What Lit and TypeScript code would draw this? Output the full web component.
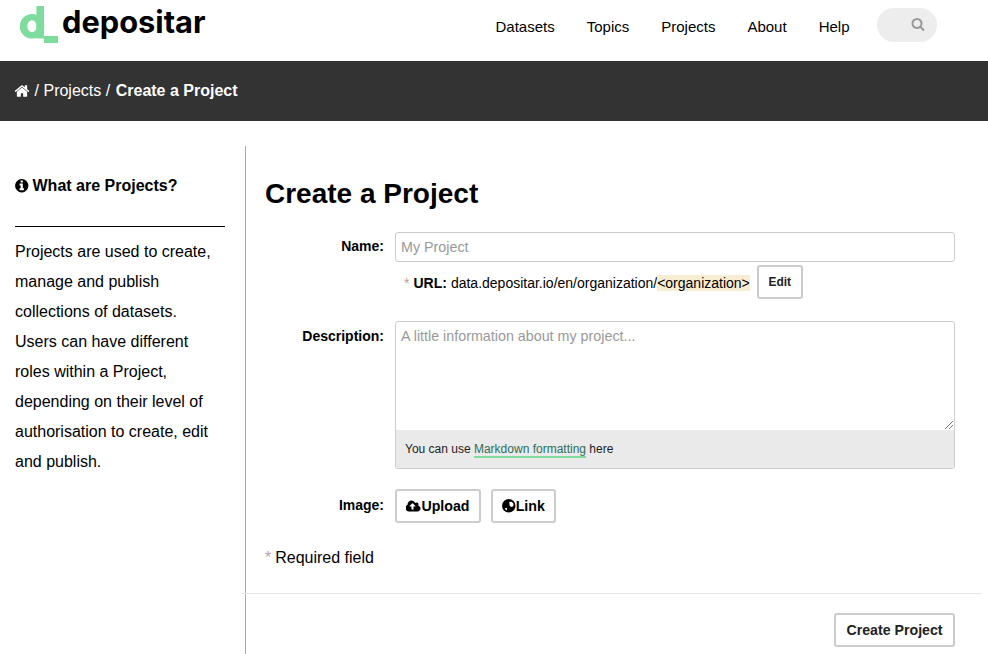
import { LitElement, html, css } from "lit";
import { customElement } from "lit/decorators.js";

const fa = (d: string, vb = "0 0 1792 1792", cls = "ic") => html`<svg class=${cls} viewBox=${vb} aria-hidden="true"><path d=${d}></path></svg>`;
const HOME = "M1472 992v480q0 26-19 45t-45 19h-384v-384h-256v384h-384q-26 0-45-19t-19-45v-480q0-1 .5-3t.5-3l575-474 575 474q1 2 1 6zm223-69l-62 74q-8 9-21 11h-3q-13 0-21-7l-692-577-692 577q-12 8-24 7-13-2-21-11l-62-74q-8-10-7-23.5t11-21.5l719-599q32-26 76-26t76 26l244 204v-195q0-14 9-23t23-9h192q14 0 23 9t9 23v408l219 182q10 8 11 21.5t-7 23.5z";
const INFO = "M1152 1376v-160q0-14-9-23t-23-9h-96v-512q0-14-9-23t-23-9h-320q-14 0-23 9t-9 23v160q0 14 9 23t23 9h96v320h-96q-14 0-23 9t-9 23v160q0 14 9 23t23 9h448q14 0 23-9t9-23zm-128-896v-160q0-14-9-23t-23-9h-192q-14 0-23 9t-9 23v160q0 14 9 23t23 9h192q14 0 23-9t9-23zm640 416q0 209-103 385.5t-279.5 279.5-385.5 103-385.5-103-279.5-279.5-103-385.5 103-385.5 279.5-279.5 385.5-103 385.5 103 279.5 279.5 103 385.5z";
const SEARCH = "M1216 832q0-185-131.5-316.5t-316.5-131.5-316.5 131.5-131.5 316.5 131.5 316.5 316.5 131.5 316.5-131.5 131.5-316.5zm512 832q0 52-38 90t-90 38q-54 0-90-38l-343-342q-179 124-399 124-143 0-273.5-55.5t-225-150-150-225-55.5-273.5 55.5-273.5 150-225 225-150 273.5-55.5 273.5 55.5 225 150 150 225 55.5 273.5q0 220-124 399l343 343q37 37 37 90z";
const CLOUD = "M1216 864q0-14-9-23l-352-352q-9-9-23-9t-23 9l-351 351q-10 12-10 24 0 14 9 23t23 9h224v352q0 13 9.5 22.5t22.5 9.5h192q13 0 22.5-9.5t9.5-22.5v-352h224q13 0 22.5-9.5t9.5-22.5zm640 288q0 159-112.5 271.5t-271.5 112.5h-1088q-185 0-316.5-131.5t-131.5-316.5q0-130 70-240t188-165q-2-30-2-43 0-212 150-362t362-150q156 0 285.5 87t188.5 231q71-62 166-62 106 0 181 75t75 181q0 76-41 138 130 31 213.5 135.5t83.5 238.5z";

@customElement("app-root")
export class AppRoot extends LitElement {
  static styles = css`
    :host { display: block; width: 988px; height: 654px; overflow: hidden; background: #fff; color: #000; font-family: "Liberation Sans", Arial, sans-serif; font-size: 16px; }
    * { box-sizing: border-box; }
    .ic { width: 1em; height: 1em; fill: currentColor; flex: none; display: inline-block; }
    header { height: 61px; display: flex; align-items: flex-start; }
    .logo { display: flex; align-items: flex-start; margin-left: 20px; padding-top: 6px; width: 455px; }
    .logo svg { width: 38px; height: 37px; flex: none; }
    .logo span { font-family: Inter, sans-serif; font-weight: 700; font-size: 30.8px; line-height: 36px; margin-left: 4px; margin-top: -2px; }
    nav { display: flex; gap: 32px; font-size: 15px; line-height: 18px; padding-top: 18px; margin-left: 20.500px; }
    .search { width: 60px; height: 34px; margin: 8px 0 0 27.500px; border-radius: 17px; background: #ededed; color: #999; display: flex; align-items: center; justify-content: flex-end; padding: 0 12px 2px 0; font-size: 14px; }
    .crumbs { height: 60px; background: #333; color: #fff; display: flex; align-items: center; padding-left: 14px; gap: 4.5px; line-height: 20px; }
    .crumbs .ic { font-size: 16px; }
    .crumbs b { font-weight: 700; margin-left: 1px; }
    .body { display: flex; margin-top: 25px; height: 508px; }
    aside { width: 246px; flex: none; border-right: 1px solid #aaa; padding: 29px 20px 0 15px; }
    aside h3 { margin: 0; font-size: 16px; line-height: 22px; font-weight: 700; display: flex; align-items: center; gap: 3px; padding-bottom: 29px; border-bottom: 1px solid #000; }
    aside .ic { font-size: 15.5px; margin-left: -1px; }
    aside p { margin: 10px 5px 0 0; line-height: 30px; }
    main { flex: 1; min-width: 0; padding: 32px 33px 0 19px; }
    h1 { margin: 0 0 23px; font-size: 28px; line-height: 31px; font-weight: 700; }
    .row { display: grid; grid-template-columns: 119px 560px; column-gap: 11px; }
    .row label { text-align: right; font-weight: 700; font-size: 14px; line-height: 20px; padding-top: 4px; }
    .desc label { padding-top: 5px; }
    .image label { padding-top: 6px; }
    .input { height: 30px; border: 1px solid #ccc; border-radius: 3px; font-size: 14.3px; color: #999; padding: 0 5px; line-height: 28px; }
    .url { display: flex; align-items: center; height: 34px; margin-top: 3px; padding-left: 9px; font-size: 14px; white-space: nowrap; }
    .url > span:not(.btn), .url > b, .url > mark, .url > i { position: relative; top: 1px; }
    .url i { font-style: normal; }
    .url .star, .req .star { color: #b9a09c; margin-right: 4px; }
    .url b { margin-right: 4px; }
    .url mark { background: #f7edd2; color: inherit; }
    .btn { display: inline-flex; align-items: center; justify-content: center; height: 34px; border: 2px solid #ccc; border-radius: 3px; background: #fff; font-weight: 700; font-size: 14.2px; color: #222; }
    .edit { width: 46px; margin-left: 7px; font-size: 12px; }
    .desc { margin-top: 22px; }
    .md { border: 1px solid #ccc; border-radius: 3px; height: 148px; display: flex; flex-direction: column; overflow: hidden; }
    .ta { height: 108px; flex: none; padding: 4px 5px; font-size: 14.3px; line-height: 20px; color: #999; position: relative; }
    .grip { position: absolute; right: 0; bottom: 0; width: 10px; height: 10px; }
    .hint { flex: 1; background: #eaeaea; font-size: 12px; line-height: 16px; padding: 11px 9px; color: #222; }
    .hint a { color: #2c6e5a; border-bottom: 2px solid #7fdc9f; }
    .image { margin-top: 20px; }
    .btns { display: flex; gap: 10px; }
    .up, .ln { color: #000; }
    .up { width: 86px; }
    .ln { width: 65px; }
    .up .ic { width: 15px; height: 15px; }
    .ln .ic { width: 13.5px; height: 13.5px; }
    .req { margin-top: 25px; line-height: 20px; }
    .req .star { margin-right: 4px; }
    hr { margin: 25px -26px 0 -24px; border: 0; border-top: 1px solid #e5e5e5; }
    .act { display: flex; justify-content: flex-end; margin-top: 19px; }
    .create { width: 121px; }
  `;

  render() {
    return html`
      <header>
        <div class="logo">
          <svg viewBox="0 0 38 37" aria-hidden="true">
            <path fill="#7fdc9f" fill-rule="evenodd" d="M12 8a12.300 12.300 0 1 0 0 24.600a12.300 12.300 0 1 0 0-24.600zM12 14.300a4.700 6 0 1 1 0 12a4.700 6 0 1 1 0-12z"></path>
            <rect x="16.400" y="0" width="7.600" height="32.500" fill="#7fdc9f"></rect>
            <rect x="24" y="30" width="14" height="7" fill="#7fdc9f"></rect>
          </svg>
          <span>depositar</span>
        </div>
        <nav><span>Datasets</span><span>Topics</span><span>Projects</span><span>About</span><span>Help</span></nav>
        <div class="search">${fa(SEARCH)}</div>
      </header>
      <div class="crumbs">${fa(HOME)}<span>/</span><span>Projects</span><span>/</span><b>Create a Project</b></div>
      <div class="body">
        <aside>
          <h3>${fa(INFO)}What are Projects?</h3>
          <p>Projects are used to create, manage and publish collections of datasets. Users can have different roles within a Project, depending on their level of authorisation to create, edit and publish.</p>
        </aside>
        <main>
          <h1>Create a Project</h1>
          <div class="row">
            <label>Name:</label>
            <div>
              <div class="input">My Project</div>
              <div class="url"><span class="star">*</span><b>URL:</b><i>data.depositar.io/en/organization/</i><mark>&lt;organization&gt;</mark><span class="btn edit">Edit</span></div>
            </div>
          </div>
          <div class="row desc">
            <label>Description:</label>
            <div class="md">
              <div class="ta">A little information about my project...
                <svg class="grip" viewBox="0 0 10 10" aria-hidden="true"><path d="M1 9 9 1M5 9l4-4" stroke="#777" fill="none"></path></svg>
              </div>
              <div class="hint">You can use <a>Markdown formatting</a> here</div>
            </div>
          </div>
          <div class="row image">
            <label>Image:</label>
            <div class="btns">
              <span class="btn up">${fa(CLOUD, "0 128 1920 1536")}Upload</span>
              <span class="btn ln"><svg class="ic" viewBox="0 0 14 14" aria-hidden="true"><circle cx="7" cy="7" r="7"></circle><path fill="#fff" d="M7.500 3.200 10 2.800l2 2.200-.2 2.400-2 1-1.800-1.200zM3 9.600l1.600-.4.800 1.200-.8 1.400-1-.8z"></path></svg>Link</span>
            </div>
          </div>
          <div class="req"><span class="star">*</span>Required field</div>
          <hr />
          <div class="act"><span class="btn create">Create Project</span></div>
        </main>
      </div>
    `;
  }
}
